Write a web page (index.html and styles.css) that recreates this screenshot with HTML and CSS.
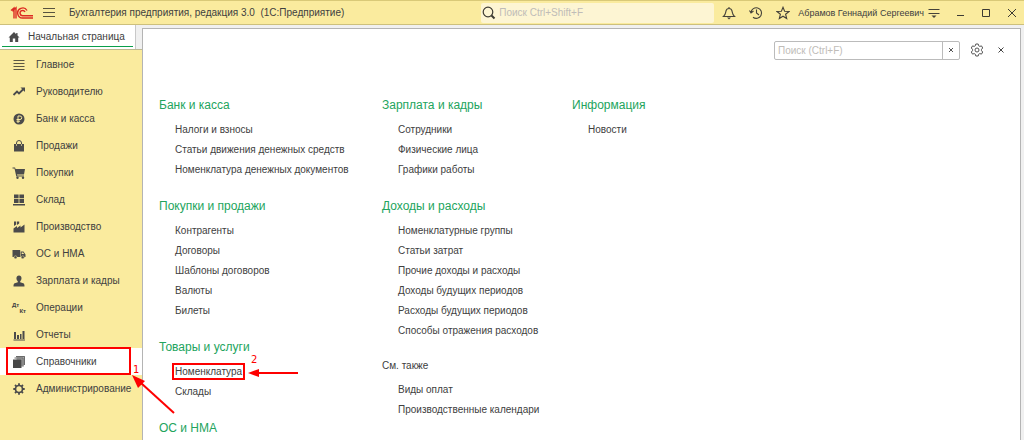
FILE: index.html
```html
<!DOCTYPE html>
<html lang="ru">
<head>
<meta charset="utf-8">
<meta name="viewport" content="width=device-width, initial-scale=1">
<title>Бухгалтерия предприятия, редакция 3.0</title>
<link rel="stylesheet" href="styles.css">
</head>
<body>
<div class="app">
  <header class="titlebar">
    <svg class="logo" viewBox="0 0 24 14" aria-label="1C" fill="none" stroke="#dc2b22" stroke-width="1.4">
      <path d="M1 4.5 4 2v10.500M3 5.500v-1L6 1.800v10.700" />
      <path d="M17 4.500A5 5 0 1 0 13 12h10" />
      <path d="M15 6a2.600 2.600 0 1 0-2 3.700h10" />
    </svg>
    <button class="icon-btn menu-btn" aria-label="Меню"><svg viewBox="0 0 12 12" width="12" height="12" fill="none" stroke="#57533f"><path d="M0 1.500h12M0 5.500h12M0 9.500h12"/></svg></button>
    <h1 class="app-title">Бухгалтерия предприятия, редакция 3.0&nbsp; (1С:Предприятие)</h1>
    <label class="global-search">
      <svg viewBox="0 0 14 14" width="14" height="14" fill="none" stroke="#3d3b33" stroke-width="1.200"><circle cx="6" cy="6" r="4.800"/><path d="m9.500 9.500 3 3" stroke-width="2"/></svg>
      <input type="text" placeholder="Поиск Ctrl+Shift+F" aria-label="Глобальный поиск">
    </label>
    <div class="tools">
      <button class="icon-btn" aria-label="Уведомления"><svg viewBox="0 0 14 14" width="14" height="14" fill="none" stroke="#45423a" stroke-width="1.100"><path d="M1.500 10.500C3.500 9 3.500 7 4 5c.3-1.500 1.200-2.500 3-2.500S9.700 3.500 10 5c.5 2 .5 4 2.500 5.500zM7 1v1.500"/><path d="M5 11.500h4L7 13.500z" fill="#45423a" stroke="none"/></svg></button>
      <button class="icon-btn" aria-label="История"><svg viewBox="0 0 14 14" width="14" height="14" fill="none" stroke="#45423a" stroke-width="1.100"><path d="M2 6.500A5.300 5.300 0 1 1 4 11.200M.5 4.500 2 7l2.500-2M7.500 3.500V7l2.500 2"/></svg></button>
      <button class="icon-btn" aria-label="Избранное"><svg viewBox="0 0 14 14" width="14" height="14" fill="none" stroke="#45423a" stroke-width="1.100"><path d="m7 1.300 1.600 3.900 4.400.3-3.400 2.700 1.100 4.300L7 10.200l-3.700 2.300 1.100-4.300L1 5.500l4.400-.3z"/></svg></button>
    </div>
    <span class="user">Абрамов Геннадий Сергеевич</span>
    <div class="window-tools">
      <button class="icon-btn" aria-label="Настройки окна"><svg viewBox="0 0 12 12" width="12" height="12" fill="none" stroke="#45423a"><path d="M.5 2.500h11M.5 6.500h11"/><path d="M3.500 8.500h5L6 11z" fill="#45423a" stroke="none"/></svg></button>
      <button class="icon-btn" aria-label="Свернуть"><svg viewBox="0 0 12 12" width="12" height="12" stroke="#3d3b33"><path d="M3 8.500h7"/></svg></button>
      <button class="icon-btn" aria-label="Развернуть"><svg viewBox="0 0 12 12" width="12" height="12" fill="none" stroke="#3d3b33"><path d="M2.500 2.500h7v7h-7z"/></svg></button>
      <button class="icon-btn" aria-label="Закрыть"><svg viewBox="0 0 12 12" width="12" height="12" stroke="#3d3b33"><path d="m2 2 8 8M10 2l-8 8"/></svg></button>
    </div>
  </header>

  <div class="workspace">
    <div class="tabs">
      <a class="tab" href="#home">
        <svg viewBox="0 0 12 12" width="12" height="12" fill="#4b4b4b"><path d="M6 1 .5 6.500h1.300V11h3V7.500h2.400V11h3V6.500h1.300L9.500 4.500V2H8.200v1.200z"/></svg>
        <span>Начальная страница</span>
      </a>
    </div>

    <nav class="sidebar">
      <a class="nav-item" href="#main"><svg viewBox="0 0 14 14" fill="none" stroke="#5b5743"><path d="M1.500 2.500h11M1.500 5.500h11M1.500 8.500h11M1.500 11.500h11"/></svg>Главное</a>
      <a class="nav-item" href="#manager"><svg viewBox="0 0 14 14" fill="none" stroke="#4b4b4b" stroke-width="1.800"><path d="m1.500 10 3.500-3.500 2 2L11.500 4"/><path d="M8.500 2.500H13V7z" fill="#4b4b4b" stroke="none"/></svg>Руководителю</a>
      <a class="nav-item" href="#bank"><svg viewBox="0 0 14 14" fill="none" stroke="#faeb9e"><circle cx="7" cy="7" r="5.500" fill="#4b4b4b" stroke="none"/><path d="M6 11V4h2a1.700 1.700 0 0 1 0 3.500H4.500M4.500 9.200H8"/></svg>Банк и касса</a>
      <a class="nav-item" href="#sales"><svg viewBox="0 0 14 14" fill="#4b4b4b"><path d="M2 5h10v7.500H2z"/><path d="M4.500 7V4a2.500 2.500 0 0 1 5 0v3" fill="none" stroke="#4b4b4b"/><path d="M4.500 5v2M9.500 5v2" stroke="#b9b083"/></svg>Продажи</a>
      <a class="nav-item" href="#purchases"><svg viewBox="0 0 14 14" fill="#4b4b4b"><path d="M.5 1.500H3l.6 1.500H13l-1 5.500H5l.3 1H12v1H4.300L2.500 2.500h-2z"/><circle cx="5.500" cy="11.800" r="1.200"/><circle cx="11" cy="11.800" r="1.200"/></svg>Покупки</a>
      <a class="nav-item" href="#stock"><svg viewBox="0 0 14 14" fill="#4b4b4b"><path d="M2 1.500h4.600v3.700H2zM7.400 1.500H12v3.700H7.400zM2 6h4.600v4H2zM7.400 6H12v4H7.400zM1 11h12v1.500H1z"/></svg>Склад</a>
      <a class="nav-item" href="#production"><svg viewBox="0 0 14 14" fill="#4b4b4b"><path d="M1.500 12.500V8.500L5 6v2l3.500-2.500V7.500l4-3v8zM2 1.500h2.200v3L2 6zM5 1.500h2.200v2L5 5z"/></svg>Производство</a>
      <a class="nav-item" href="#assets"><svg viewBox="0 0 14 14" fill="#4b4b4b"><path d="M.5 3H8.200V10H.5zM8.700 4.500H11.500L13.500 7.500V10H8.700z"/><path d="M9.700 5.500h1.400l1 1.500H9.700z" fill="#faeb9e"/><circle cx="3.500" cy="10.300" r="1.500" stroke="#faeb9e" stroke-width=".5"/><circle cx="10.700" cy="10.300" r="1.500" stroke="#faeb9e" stroke-width=".5"/></svg>ОС и НМА</a>
      <a class="nav-item" href="#salary"><svg viewBox="0 0 14 14" fill="#4b4b4b"><path d="M7 1.500c3.300 0 3 4.500 1.200 5.700v1l3 1c.9.300 1.300 1 1.300 3.300h-11c0-2.300.4-3 1.300-3.300l3-1v-1C4 6 3.700 1.500 7 1.500z"/></svg>Зарплата и кадры</a>
      <a class="nav-item" href="#operations"><span class="dtkt"><span>Дт</span><span>Кт</span></span>Операции</a>
      <a class="nav-item" href="#reports"><svg viewBox="0 0 14 14" fill="#4b4b4b"><path d="M2 4h2v7H2zM5 7h2v4H5zM8 6h1.500v5H8zM10.500 3h2v8h-2zM1.500 11.500h11.500v1H1.500z"/></svg>Отчеты</a>
      <a class="nav-item active" href="#catalogs" aria-current="page"><svg viewBox="0 0 14 14"><path d="M4.500 1H13v9h-1.500v1.500H4.500z" fill="#a5a5a5"/><path d="M4 1.500h8.500V10M2.500 3h8.500v8.500" fill="none" stroke="#6a6a6a"/><path d="M1 4.500h8.500V13H1z" fill="#474747"/></svg>Справочники
        <span class="mark mark-nav"></span>
        <span class="mark-num num-nav">1</span>
        <svg class="arrow arrow-nav" viewBox="0 0 46 42"><path d="m43 38-33-30" stroke="#fe0000" stroke-width="2"/><path d="m1 0 13 6-7 7z" fill="#fe0000"/></svg>
      </a>
      <a class="nav-item" href="#admin"><svg viewBox="0 0 14 14" fill="none" stroke="#4b4b4b"><circle cx="7" cy="7" r="3.500" stroke-width="1.700"/><path d="M7 1.300v2M7 10.700v2M1.300 7h2M10.700 7h2M3 3l1.400 1.400M9.600 9.600 11 11M11 3 9.600 4.400M4.400 9.600 3 11" stroke-width="1.800"/></svg>Администрирование</a>
    </nav>

    <main class="panel">
      <div class="panel-tools">
        <div class="panel-search">
          <input type="text" placeholder="Поиск (Ctrl+F)" aria-label="Поиск">
          <button class="clear" aria-label="Очистить"><svg viewBox="0 0 6 6" width="6" height="6" stroke="#555"><path d="m1 1 4 4M5 1 1 5"/></svg></button>
        </div>
        <button class="icon-btn" aria-label="Настройки"><svg viewBox="0 0 14 14" width="14" height="14" fill="none" stroke="#555"><path d="M5.800 1h2.400l.4 1.700 1.200.7 1.700-.5 1.200 2.100L11.500 6.300v1.400l1.200 1.300-1.200 2.100-1.700-.5-1.200.7-.4 1.700H5.800l-.4-1.700-1.200-.7-1.700.5L1.300 9l1.200-1.300V6.300L1.300 5l1.200-2.100 1.700.5 1.200-.7z"/><circle cx="7" cy="7" r="2"/></svg></button>
        <button class="icon-btn" aria-label="Закрыть"><svg viewBox="0 0 8 8" width="8" height="8" stroke="#444"><path d="m1.500 1.500 5 5M6.500 1.500l-5 5"/></svg></button>
      </div>

      <div class="columns">
        <div class="column">
          <section class="group">
            <h2>Банк и касса</h2>
            <ul><li><a href="#">Налоги и взносы</a></li><li><a href="#">Статьи движения денежных средств</a></li><li><a href="#">Номенклатура денежных документов</a></li></ul>
          </section>
          <section class="group">
            <h2>Покупки и продажи</h2>
            <ul><li><a href="#">Контрагенты</a></li><li><a href="#">Договоры</a></li><li><a href="#">Шаблоны договоров</a></li><li><a href="#">Валюты</a></li><li><a href="#">Билеты</a></li></ul>
          </section>
          <section class="group">
            <h2>Товары и услуги</h2>
            <ul>
              <li><a class="marked" href="#">Номенклатура
                <span class="mark mark-link"></span>
                <span class="mark-num num-link">2</span>
                <svg class="arrow arrow-link" viewBox="0 0 50 10"><path d="M10 5h40" stroke="#fe0000" stroke-width="2"/><path d="m0 5 11-4v8z" fill="#fe0000"/></svg>
              </a></li>
              <li><a href="#">Склады</a></li>
            </ul>
          </section>
          <section class="group">
            <h2>ОС и НМА</h2>
          </section>
        </div>
        <div class="column">
          <section class="group">
            <h2>Зарплата и кадры</h2>
            <ul><li><a href="#">Сотрудники</a></li><li><a href="#">Физические лица</a></li><li><a href="#">Графики работы</a></li></ul>
          </section>
          <section class="group">
            <h2>Доходы и расходы</h2>
            <ul><li><a href="#">Номенклатурные группы</a></li><li><a href="#">Статьи затрат</a></li><li><a href="#">Прочие доходы и расходы</a></li><li><a href="#">Доходы будущих периодов</a></li><li><a href="#">Расходы будущих периодов</a></li><li><a href="#">Способы отражения расходов</a></li></ul>
          </section>
          <section class="group">
            <h2 class="see-also">См. также</h2>
            <ul><li><a href="#">Виды оплат</a></li><li><a href="#">Производственные календари</a></li></ul>
          </section>
        </div>
        <div class="column">
          <section class="group">
            <h2>Информация</h2>
            <ul><li><a href="#">Новости</a></li></ul>
          </section>
        </div>
      </div>
    </main>
  </div>
</div>
</body>
</html>
```

FILE: styles.css
```css
* { box-sizing: border-box; }

body {
  margin: 0;
  font: 10px/20px "Liberation Sans", Arial, sans-serif;
  color: #404040;
}

a { color: inherit; text-decoration: none; }
button, input { font: inherit; color: inherit; }
svg { display: block; flex: none; }

.app {
  display: flex;
  flex-direction: column;
  height: 100vh;
  overflow: hidden;
}

/* Title bar */
.titlebar {
  display: flex;
  align-items: center;
  height: 25px;
  flex: none;
  padding: 0 6px 0 10px;
  background: #faeb9e;
  border-top: 1px solid #d9c978;
  border-bottom: 1px solid #cdc07c;
}

.logo { width: 24px; height: 14px; }

.icon-btn {
  display: grid;
  place-items: center;
  padding: 0;
  border: 0;
  background: none;
}

.menu-btn { margin-left: 9px; }

.app-title {
  margin: 0 0 0 14px;
  font-size: 10px;
  font-weight: 400;
  white-space: nowrap;
}

.global-search {
  display: flex;
  align-items: center;
  gap: 3px;
  width: 233px;
  height: 20px;
  margin-left: auto;
  padding-left: 1px;
  border-radius: 2px;
  background: #fdf5d3;
}

.global-search input {
  flex: 1;
  min-width: 0;
  padding: 0;
  border: 0;
  background: none;
}

input::placeholder { color: #c0bcb8; opacity: 1; }

.tools { display: flex; gap: 13px; margin-left: 8px; }
.user { margin-left: 8px; font-size: 9px; white-space: nowrap; }
.window-tools { display: flex; gap: 14px; margin-left: 4px; }

/* Workspace */
.workspace {
  display: grid;
  grid-template-columns: 142px 1fr;
  grid-template-rows: 25px 1fr;
  flex: 1;
  min-height: 0;
  background: #f0f0f0;
}

.tabs {
  grid-area: 1 / 1;
  padding-right: 6px;
  border-bottom: 1px solid #bdb992;
}

.tab {
  display: flex;
  align-items: center;
  gap: 8px;
  height: 24px;
  padding: 0 0 1px 8px;
  white-space: nowrap;
  background: linear-gradient(#0a9f4b, #0a9f4b) 2px 21px / 131px 1px no-repeat, #fff;
  border-right: 1px solid #c8c8c8;
}

.sidebar {
  grid-area: 2 / 1;
  padding-top: 1px;
  background: #faeb9e;
}

.nav-item {
  display: flex;
  align-items: center;
  gap: 10px;
  position: relative;
  height: 27px;
  padding-left: 12px;
  white-space: nowrap;
}

.nav-item > svg:first-child { width: 14px; height: 14px; }
.nav-item.active { background: #fff; }

.dtkt {
  display: grid;
  width: 14px;
  font-size: 6px;
  line-height: 6px;
  font-weight: 700;
}

.dtkt span:last-child { text-align: right; }

/* Section panel */
.panel {
  grid-area: 1 / 2 / 3 / 3;
  margin: 3px 3px 0 0;
  padding: 11px 12px 0 16px;
  background: #fff;
  border: 1px solid #b4b4b4;
  border-bottom: 0;
  overflow: hidden;
}

.panel-tools {
  display: flex;
  align-items: center;
  justify-content: flex-end;
  gap: 10px;
}

.panel-tools .icon-btn { width: 14px; height: 20px; }

.panel-search {
  display: flex;
  width: 186px;
  height: 19px;
  border: 1px solid #bbb;
  border-radius: 2px;
}

.panel-search input {
  flex: 1;
  min-width: 0;
  padding: 1px 3px 0;
  border: 0;
  background: none;
}

.clear {
  display: grid;
  place-items: center;
  width: 17px;
  padding: 0;
  border: 0;
  border-left: 1px solid #bbb;
  background: none;
}

.columns {
  display: grid;
  grid-template-columns: 223px 190px 1fr;
  padding-top: 33px;
}

.group { margin-bottom: 14px; }

.group h2 {
  margin: 0 0 3px;
  font-size: 12px;
  line-height: 24px;
  font-weight: 400;
  color: #22a45d;
}

.group h2.see-also {
  padding-top: 1px;
  margin-bottom: 4px;
  font-size: 10px;
  line-height: 20px;
  color: #404040;
}

.group ul { margin: 0; padding: 0 0 0 16px; list-style: none; }
.group li { height: 20px; white-space: nowrap; }

/* Step marks */
.marked { position: relative; display: inline-block; }
.mark { position: absolute; border: 2px solid #fe0000; }
.mark-nav { inset: -1px 11px 0 6px; }
.mark-link { inset: 1px -3px 2px -3px; }

.mark-num {
  position: absolute;
  font: 10px/12px "DejaVu Sans", sans-serif;
  color: #fe0000;
}

.num-nav { left: 133px; top: 16px; }
.num-link { left: 76px; top: -8px; }

.arrow { position: absolute; z-index: 1; }
.arrow-nav { left: 131px; top: 27px; width: 46px; height: 42px; }
.arrow-link { left: 73px; top: 6px; width: 50px; height: 10px; }
```
